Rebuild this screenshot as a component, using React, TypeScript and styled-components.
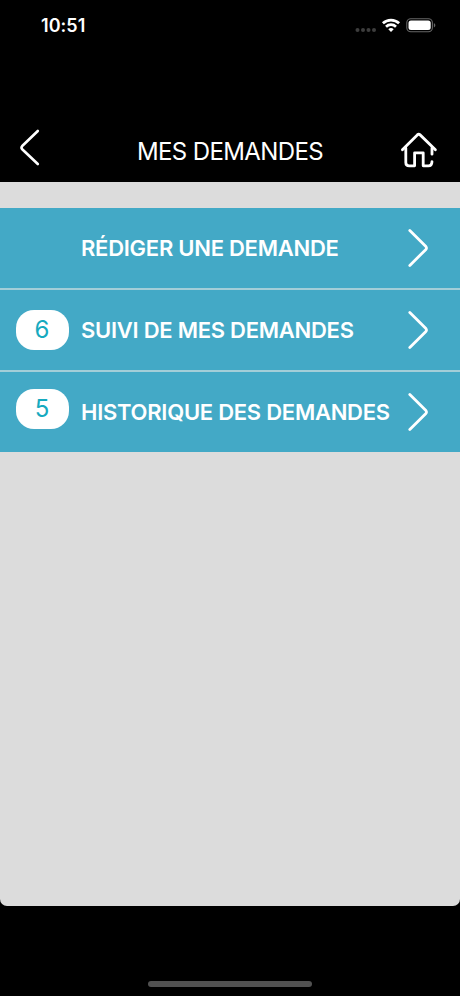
import React from "react";
import styled, { createGlobalStyle } from "styled-components";

const GlobalStyle = createGlobalStyle`
  * { box-sizing: border-box; }
  html, body { margin: 0; background: #000; }
  body { font-family: Inter, "Liberation Sans", sans-serif; }
  button { font: inherit; color: inherit; background: none; border: 0; padding: 0; }
`;

const Screen = styled.div`
  width: 460px;
  height: 996px;
  display: flex;
  flex-direction: column;
  background: #000;
  color: #fff;
  overflow: hidden;
`;

const StatusBar = styled.div`
  height: 52px;
  flex: none;
  display: flex;
  align-items: center;
  justify-content: space-between;
  padding: 0 24px 0 41px;
`;

const Clock = styled.span`
  font-size: 18px;
  font-weight: 600;
  line-height: 22px;
  letter-spacing: 0.05px;
`;

const StatusIcons = styled.svg`
  display: block;
`;

const Header = styled.header`
  height: 130px;
  flex: none;
  display: grid;
  grid-template-columns: 60px 1fr 60px;
  align-items: end;
`;

const Title = styled.h1`
  margin: 0;
  padding-bottom: 15px;
  text-align: center;
  font-size: 24px;
  font-weight: 400;
  line-height: 30px;
  letter-spacing: -0.62px;
  white-space: nowrap;
`;

const IconButton = styled.button`
  height: 66px;
  display: block;
  svg { display: block; }
`;

const Content = styled.main`
  height: 724px;
  flex: none;
  padding-top: 26px;
  background: #dcdcdc;
  border-radius: 0 0 7px 7px;
`;

const Menu = styled.nav`
  display: flex;
  flex-direction: column;
  gap: 2px;
  background: #a3ced8;
`;

const MenuRow = styled.button`
  height: 80px;
  width: 100%;
  display: grid;
  grid-template-columns: 65px 1fr 36px;
  align-items: center;
  padding-left: 16px;
  padding-right: 16px;
  background: #43a9c6;
  text-align: left;
`;

const Badge = styled.span<{ $lift: number }>`
  width: 53px;
  height: 40px;
  margin-bottom: ${(p) => p.$lift}px;
  padding: 0 1px 1px 0;
  display: flex;
  align-items: center;
  justify-content: center;
  border-radius: 18px;
  background: #fff;
  color: #16aabf;
  font-size: 24px;
  font-weight: 400;
`;

const Label = styled.span`
  grid-column: 2;
  font-size: 22px;
  font-weight: 600;
  line-height: 28px;
  letter-spacing: -0.26px;
  white-space: nowrap;
`;

const Chevron = styled.svg`
  grid-column: 3;
  justify-self: end;
  display: block;
`;

const BottomBar = styled.footer`
  flex: 1;
  display: flex;
  justify-content: center;
  align-items: flex-end;
  padding-bottom: 9px;
`;

const HomeIndicator = styled.div`
  width: 164px;
  height: 6px;
  border-radius: 3px;
  background: #515151;
`;

type Item = { label: string; count?: number; lift?: number };

const items: Item[] = [
  { label: "RÉDIGER UNE DEMANDE" },
  { label: "SUIVI DE MES DEMANDES", count: 6 },
  { label: "HISTORIQUE DES DEMANDES", count: 5, lift: 6 },
];

export default function App() {
  return (
    <>
      <GlobalStyle />
      <Screen>
        <StatusBar>
          <Clock>10:51</Clock>
          <StatusIcons width="82" height="20" viewBox="354 16 82 20" fill="none">
            <g fill="#3d3d3d">
              <circle cx="357.5" cy="30" r="2" />
              <circle cx="363" cy="30" r="2" />
              <circle cx="368.5" cy="30" r="2" />
              <circle cx="374" cy="30" r="2" />
            </g>
            <g stroke="#fff" strokeWidth="2.7">
              <path d="M382.9 23.3a11.7 11.7 0 0 1 16.2 0" />
              <path d="M386 26.7a7.2 7.2 0 0 1 10 0" />
            </g>
            <path d="M391 32l-2.7-2.8a3.9 3.9 0 0 1 5.4 0z" fill="#fff" />
            <rect x="406.8" y="18.7" width="25.6" height="13" rx="4" stroke="#666" strokeWidth="1.1" />
            <rect x="408.5" y="20.4" width="22.2" height="9.6" rx="2.5" fill="#fff" />
            <path d="M433.9 23.2v4.2c1.9-.6 1.9-3.6 0-4.2z" fill="#666" />
          </StatusIcons>
        </StatusBar>
        <Header>
          <IconButton aria-label="Retour">
            <svg width="60" height="66" viewBox="0 116 60 66" fill="none" stroke="#fff" strokeWidth="2.6" strokeLinecap="round" strokeLinejoin="round">
              <path d="M37.8 131L22.2 146Q20.8 147.6 22.2 149.2L37.8 164" />
            </svg>
          </IconButton>
          <Title>MES DEMANDES</Title>
          <IconButton aria-label="Accueil">
            <svg width="60" height="66" viewBox="400 116 60 66" fill="none" stroke="#fff" strokeWidth="2.8" strokeLinecap="round" strokeLinejoin="round">
              <path d="M402.4 149.7L417.3 134.9Q418.7 133.6 420.1 134.9L435.4 149.7" />
              <path d="M405.8 148V162.5Q405.8 165.8 409.2 165.8H414.6V152.8H423.2V165.8H428.4Q431.8 165.8 432 161.6M432 148V154.2" />
            </svg>
          </IconButton>
        </Header>
        <Content>
          <Menu>
            {items.map((item) => (
              <MenuRow key={item.label}>
                {item.count !== undefined && <Badge $lift={item.lift ?? 0}>{item.count}</Badge>}
                <Label>{item.label}</Label>
                <Chevron width="36" height="40" viewBox="0 0 36 40" fill="none" stroke="#fff" strokeWidth="2.8" strokeLinecap="round" strokeLinejoin="round">
                  <path d="M1.8 2.5L17.9 18.5Q19 20 17.9 21.4L1.8 37.4" />
                </Chevron>
              </MenuRow>
            ))}
          </Menu>
        </Content>
        <BottomBar>
          <HomeIndicator />
        </BottomBar>
      </Screen>
    </>
  );
}
